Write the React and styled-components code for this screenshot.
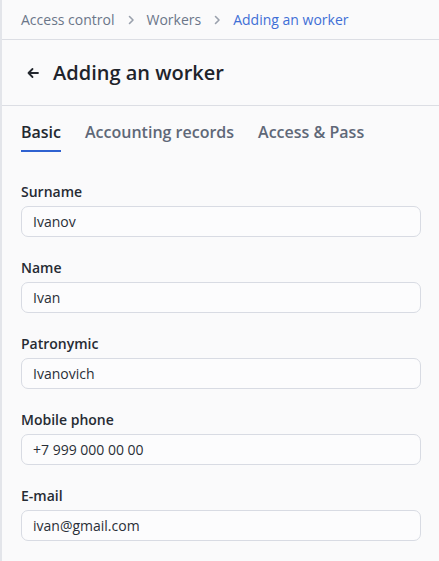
import React from 'react';
import styled, { createGlobalStyle } from 'styled-components';

const GlobalStyle = createGlobalStyle`
  html, body {
    margin: 0;
    padding: 0;
    background: #fafafb;
    font-family: "Open Sans", "Liberation Sans", sans-serif;
  }
`;

const Page = styled.div`
  min-height: 561px;
  border-left: 2px solid #e3e5ea;
  box-sizing: border-box;
  background: #fafafb;
`;

const Breadcrumbs = styled.nav`
  height: 39px;
  display: flex;
  align-items: center;
  padding-left: 19px;
  border-bottom: 1px solid #dcdee4;
  font-size: 14px;
  color: #6b7689;
`;

const Crumb = styled.span`
  color: ${(p) => (p.active ? '#3f6fd6' : '#6b7689')};
`;

const Chevron = styled.svg`
  width: 12px;
  height: 12px;
  margin: 0 10px;
  color: #9aa1ad;
`;

const TitleBar = styled.div`
  height: 65px;
  display: flex;
  align-items: center;
  padding-left: 23px;
  border-bottom: 1px solid #dcdee4;
`;

const BackIcon = styled.svg`
  width: 16px;
  height: 16px;
  margin-right: 12px;
  color: #23272e;
`;

const Title = styled.h1`
  margin: 0;
  font-size: 20px;
  font-weight: 600;
  color: #1f242b;
`;

const Tabs = styled.div`
  display: flex;
  gap: 24px;
  padding: 15px 19px 0;
`;

const Tab = styled.div`
  font-size: 16px;
  font-weight: 600;
  padding-bottom: 7px;
  color: ${(p) => (p.active ? '#232830' : '#5f6878')};
  border-bottom: 2px solid ${(p) => (p.active ? '#2f62d1' : 'transparent')};
`;

const Form = styled.div`
  display: flex;
  flex-direction: column;
  gap: 21px;
  padding: 30px 18px 0 19px;
`;

const Field = styled.div`
  display: flex;
  flex-direction: column;
  gap: 5px;
`;

const Label = styled.label`
  font-size: 14px;
  font-weight: 600;
  color: #262b33;
`;

const Input = styled.div`
  height: 29px;
  border: 1px solid #d8dbe3;
  border-radius: 7px;
  background: #fcfcfd;
  display: flex;
  align-items: center;
  padding-left: 11px;
  font-size: 14px;
  color: #2a2f37;
`;

const fields = [
  ['Surname', 'Ivanov'],
  ['Name', 'Ivan'],
  ['Patronymic', 'Ivanovich'],
  ['Mobile phone', '+7 999 000 00 00'],
  ['E-mail', 'ivan@gmail.com'],
];

function Arrow() {
  return (
    <Chevron viewBox="0 0 12 12" fill="none" stroke="currentColor" strokeWidth="1.6" strokeLinecap="round" strokeLinejoin="round">
      <path d="M4.5 2.5 8 6l-3.5 3.5" />
    </Chevron>
  );
}

export default function App() {
  return (
    <Page>
      <GlobalStyle />
      <Breadcrumbs>
        <Crumb>Access control</Crumb>
        <Arrow />
        <Crumb>Workers</Crumb>
        <Arrow />
        <Crumb active>Adding an worker</Crumb>
      </Breadcrumbs>
      <TitleBar>
        <BackIcon viewBox="0 0 16 16" fill="none" stroke="currentColor" strokeWidth="1.8" strokeLinecap="round" strokeLinejoin="round">
          <path d="M13 8H3.5M7.5 4 3.5 8l4 4" />
        </BackIcon>
        <Title>Adding an worker</Title>
      </TitleBar>
      <Tabs>
        <Tab active>Basic</Tab>
        <Tab>Accounting records</Tab>
        <Tab>Access &amp; Pass</Tab>
      </Tabs>
      <Form>
        {fields.map(([label, value]) => (
          <Field key={label}>
            <Label>{label}</Label>
            <Input>{value}</Input>
          </Field>
        ))}
      </Form>
    </Page>
  );
}
